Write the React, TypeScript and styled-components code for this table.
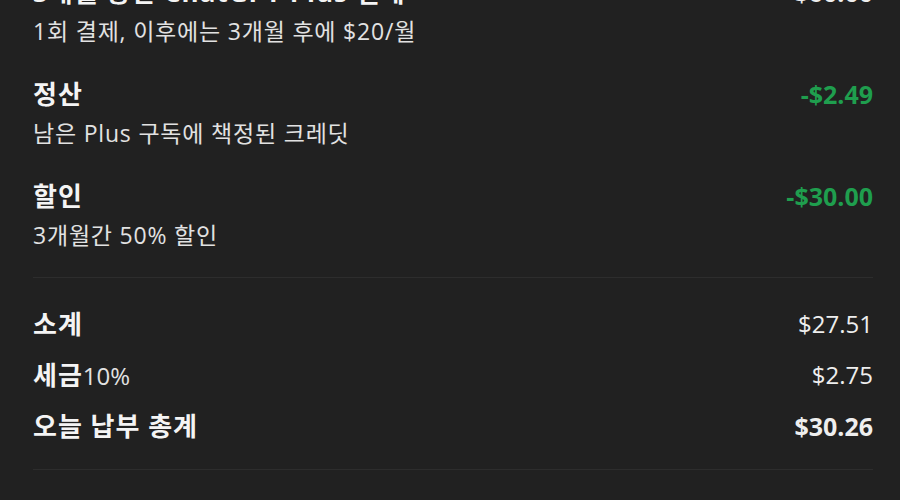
import React from "react";
import styled, { createGlobalStyle } from "styled-components";

const GlobalStyle = createGlobalStyle`
  html, body {
    margin: 0;
    padding: 0;
    background: #212121;
    overflow: hidden;
  }
  body {
    font-family: "Open Sans", "Noto Sans CJK KR", "Noto Sans", sans-serif;
    color: #ececec;
    -webkit-font-smoothing: antialiased;
  }
`;

const Panel = styled.div`
  margin-top: -24px;
  padding: 0 27px 0 33px;
  height: 524px;
  box-sizing: border-box;
`;

const Section = styled.section<{ $gap: number; $padTop: number; $padBottom: number }>`
  display: flex;
  flex-direction: column;
  gap: ${(p) => p.$gap}px;
  padding: ${(p) => p.$padTop}px 0 ${(p) => p.$padBottom}px;
  border-bottom: 1px solid #2d2d2d;
`;

const Item = styled.div`
  display: grid;
  grid-template-columns: 1fr auto;
  align-items: center;
  row-gap: 7px;
`;

const Title = styled.div`
  font-size: 26px;
  line-height: 32px;
  font-weight: 700;
  letter-spacing: 1px;
  color: #f4f4f4;
`;

const Sub = styled.div`
  grid-column: 1 / -1;
  font-size: 23px;
  line-height: 32px;
  font-weight: 400;
  letter-spacing: 0.8px;
  color: #e2e2e2;
`;

const Amount = styled.div<{ $tone?: "green" | "plain"; $bold?: boolean }>`
  font-size: ${(p) => (p.$bold ? 25 : 24)}px;
  line-height: 32px;
  font-weight: ${(p) => (p.$bold ? 700 : 400)};
  color: ${(p) => (p.$tone === "green" ? "#1f9e4e" : "#eeeeee")};
  text-align: right;
`;

const SumRow = styled.div`
  display: flex;
  justify-content: space-between;
  align-items: center;
  height: 34px;
`;

const SumLabel = styled.div`
  font-size: 26px;
  line-height: 34px;
  font-weight: 700;
  letter-spacing: 1px;
  color: #f4f4f4;
`;

const Rate = styled.span`
  font-size: 24px;
  font-weight: 400;
  letter-spacing: 0;
  color: #e2e2e2;
`;

type Line = { title: string; sub: string; amount: string; green?: boolean };

const lines: Line[] = [
  { title: "3개월 동안 ChatGPT Plus 결제", sub: "1회 결제, 이후에는 3개월 후에 $20/월", amount: "$60.00" },
  { title: "정산", sub: "남은 Plus 구독에 책정된 크레딧", amount: "-$2.49", green: true },
  { title: "할인", sub: "3개월간 50% 할인", amount: "-$30.00", green: true },
];

export default function App() {
  return (
    <>
      <GlobalStyle />
      <Panel>
        <Section $gap={31} $padTop={0} $padBottom={26}>
          {lines.map((l) => (
            <Item key={l.title}>
              <Title>{l.title}</Title>
              <Amount $bold $tone={l.green ? "green" : "plain"}>{l.amount}</Amount>
              <Sub>{l.sub}</Sub>
            </Item>
          ))}
        </Section>
        <Section $gap={17} $padTop={29} $padBottom={26}>
          <SumRow>
            <SumLabel>소계</SumLabel>
            <Amount>$27.51</Amount>
          </SumRow>
          <SumRow>
            <SumLabel>
              세금<Rate>10%</Rate>
            </SumLabel>
            <Amount>$2.75</Amount>
          </SumRow>
          <SumRow>
            <SumLabel>오늘 납부 총계</SumLabel>
            <Amount $bold>$30.26</Amount>
          </SumRow>
        </Section>
      </Panel>
    </>
  );
}
